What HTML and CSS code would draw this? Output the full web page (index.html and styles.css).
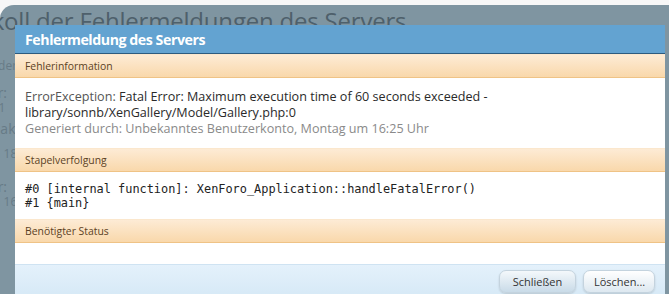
FILE: index.html
```html
<!DOCTYPE html>
<html lang="de">
<head>
  <meta charset="UTF-8">
  <title>Protokoll der Fehlermeldungen des Servers</title>
  <link rel="stylesheet" href="styles.css">
</head>
<body>
  <div class="page">
    <!-- Seite hinter dem Overlay -->
    <h1 class="page-title">Protokoll der Fehlermeldungen des Servers</h1>
    <div class="page-rows">
      <div class="row r1">Fehler der</div>
      <div class="row r2">Error:</div>
      <div class="row r3">Vor 1</div>
      <div class="row r4">Objekt jak</div>
      <div class="row r5">um 18</div>
      <div class="row r6">Error:</div>
      <div class="row r7">um 16</div>
    </div>

    <!-- Dialog -->
    <div class="overlay">
      <h2 class="overlay-head">Fehlermeldung des Servers</h2>

      <h3 class="section-head">Fehlerinformation</h3>
      <div class="section-body info">
        <div><span class="exc">ErrorException:</span> Fatal Error: Maximum execution time of 60 seconds exceeded -</div>
        <div>library/sonnb/XenGallery/Model/Gallery.php:0</div>
        <div class="muted">Generiert durch: Unbekanntes Benutzerkonto, Montag um 16:25 Uhr</div>
      </div>

      <h3 class="section-head">Stapelverfolgung</h3>
      <pre class="section-body trace">#0 [internal function]: XenForo_Application::handleFatalError()
#1 {main}</pre>

      <h3 class="section-head">Benötigter Status</h3>
      <div class="section-body empty"></div>

      <div class="overlay-foot">
        <button class="btn">Schließen</button>
        <button class="btn">Löschen...</button>
      </div>
    </div>
  </div>
</body>
</html>
```

FILE: styles.css
```css
:root {
  --bg: #f7f7f7;
  --shade: #7f95a1;
  --head-blue: #63a3d1;
  --head-line: #2c5b7f;
  --peach-top: #fdebd5;
  --peach-bottom: #f9d8ab;
  --peach-line: #efc386;
  --foot-top: #e4f1fb;
  --foot-bottom: #d3e7f5;
  --font-base: "Open Sans", "DejaVu Sans", sans-serif;
  --font-mono: "DejaVu Sans Mono", "Liberation Mono", monospace;
}
*, *::before, *::after { box-sizing: border-box; }
html, body { height: 100%; }
body {
  margin: 0;
  background: var(--bg);
  font-family: var(--font-base);
  overflow: hidden;
}

/* Seite (abgedunkelt) */
.page {
  position: relative;
  margin-top: 5px;
  height: calc(100% - 5px);
  background: var(--shade);
  border-top-left-radius: 14px;
  overflow: hidden;
}
.page-title {
  margin: 0;
  padding-top: 1px;
  font-size: 24px;
  font-weight: normal;
  color: #4e606b;
  white-space: nowrap;
  margin-left: -69px;
  line-height: 30px;
  letter-spacing: -0.2px;
}
.page-rows {
  color: #677b87;
  font-size: 12px;
  white-space: nowrap;
}
.row { line-height: 15px; }
.r1 { margin-left: -40px; margin-top: 22px; }
.r2 { margin-left: -30px; margin-top: 12px; font-size: 14px; }
.r3 { margin-left: -24px; }
.r4 { margin-left: -50px; margin-top: 6px; font-size: 14px; }
.r5 { margin-left: -18px; margin-top: 10px; }
.r6 { margin-left: -30px; margin-top: 18px; font-size: 14px; }
.r7 { margin-left: -18px; }

/* Dialog */
.overlay {
  position: absolute;
  top: 20px;
  left: 15px;
  width: 650px;
  background: #fff;
}
.overlay-head {
  margin: 0;
  height: 29px;
  padding: 1px 10px 0;
  background: var(--head-blue);
  border-bottom: 1px solid var(--head-line);
  color: #fff;
  font-size: 14.2px;
  font-weight: bold;
  line-height: 27px;
  letter-spacing: -0.45px;
}
.section-head {
  margin: 0;
  height: 24px;
  padding: 0 10px;
  background: linear-gradient(var(--peach-top), var(--peach-bottom));
  border-top: 1px solid #fbe7cd;
  border-bottom: 1px solid var(--peach-line);
  color: #5b4225;
  font-size: 10.4px;
  font-weight: normal;
  line-height: 22px;
}
.section-body {
  margin: 0;
  padding: 0 10px;
  background: #fff;
}
.info {
  height: 70px;
  padding-top: 11px;
  font-size: 12.6px;
  line-height: 16px;
  color: #2a2a2a;
}
.exc { color: #555; }
.muted { color: #8a8a8a; }
.trace {
  height: 47px;
  padding-top: 10px;
  font-family: var(--font-mono);
  font-size: 11.9px;
  line-height: 14px;
  color: #222;
}
.empty { height: 21px; }

.overlay-foot {
  display: flex;
  justify-content: flex-end;
  gap: 7px;
  height: 40px;
  padding: 5px 10px 0;
  background: linear-gradient(var(--foot-top), var(--foot-bottom));
  border-top: 1px solid #cfe3f2;
}
.btn {
  height: 23px;
  padding: 0 10px;
  border: 1px solid #c4d3de;
  border-radius: 7px;
  background: linear-gradient(#ffffff, #dde8f0);
  box-shadow: 0 1px 2px rgba(0,0,0,0.15);
  font-family: var(--font-base);
  font-size: 11px;
  color: #333;
}
.btn:first-child { width: 77px; background: linear-gradient(#f4f8fb, #c9dbe8); }
.btn:last-child { width: 72px; }
```
